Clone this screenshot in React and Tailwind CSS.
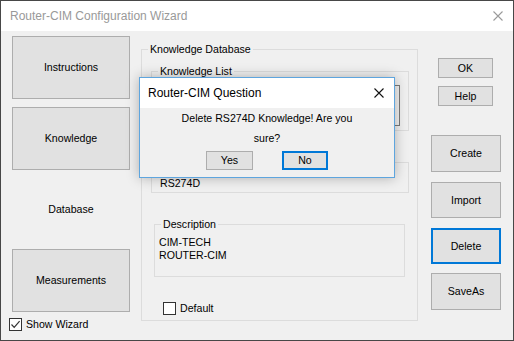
const font = { fontFamily: '"Liberation Sans", Arial, sans-serif' };

function WinButton({ children, className = "", focused = false }) {
  return (
    <div
      className={`flex items-center justify-center bg-[#e1e1e1] text-[10.6px] leading-[13px] text-black ${
        focused ? "border-2 border-[#0078d7]" : "border border-[#adadad]"
      } ${className}`}
    >
      {children}
    </div>
  );
}

function CloseIcon({ color, className = "" }) {
  return (
    <svg width="10" height="10" viewBox="0 0 10 10" className={className}>
      <path d="M0.5 0.5 L9.5 9.5 M9.5 0.5 L0.5 9.5" stroke={color} strokeWidth="1.1" fill="none" />
    </svg>
  );
}

function Group({ title, className = "", legendClass = "ml-[6px]", children }) {
  return (
    <fieldset className={`border border-[#dcdcdc] ${className}`}>
      <legend className={`${legendClass} px-[2px] text-[10.6px] leading-[13px] text-black`}>{title}</legend>
      {children}
    </fieldset>
  );
}

function CheckBox({ checked }) {
  return (
    <div className="flex h-[13px] w-[13px] items-center justify-center border border-[#333333] bg-white">
      {checked ? (
        <svg width="11" height="11" viewBox="0 0 11 11">
          <path d="M1.5 5.5 L4.2 8.3 L9.6 2.2" stroke="#333333" strokeWidth="1.2" fill="none" />
        </svg>
      ) : null}
    </div>
  );
}

export default function App() {
  return (
    <div style={font} className="relative flex h-[341px] w-[514px] flex-col border border-[#474747] bg-[#f0f0f0] text-black">
      {/* title bar */}
      <div className="flex h-[30px] shrink-0 items-center justify-between bg-white pl-[9px] pr-[10px]">
        <span className="text-[12px] leading-[14px] text-[#999999]">Router-CIM Configuration Wizard</span>
        <CloseIcon color="#9a9a9a" />
      </div>

      <div className="flex flex-1">
        {/* left navigation */}
        <div className="flex w-[129px] shrink-0 flex-col pl-[11px] pt-[5px]">
          <WinButton className="h-[63px] w-[118px]">Instructions</WinButton>
          <WinButton className="mt-[8px] h-[63px] w-[118px]">Knowledge</WinButton>
          <div className="flex h-[79px] w-[118px] items-center justify-center text-[10.6px] leading-[13px]">Database</div>
          <WinButton className="h-[63px] w-[118px]">Measurements</WinButton>
          <div className="-ml-[3px] mt-[6px] flex items-center gap-[4px]">
            <CheckBox checked />
            <span className="text-[10.6px] leading-[13px]">Show Wizard</span>
          </div>
        </div>

        {/* knowledge database */}
        <Group title="Knowledge Database" className="ml-[11px] mt-[12px] h-[278px] w-[277px] shrink-0">
          <Group title="Knowledge List" className="ml-[9px] mr-[8px] mt-[9px] h-[66px]">
            <div className="ml-[8px] mr-[8px] mt-[7px] h-[41px] border border-[#7a7a7a] bg-[#f0f0f0]" />
          </Group>
          <Group title="Name" className="ml-[9px] mr-[8px] mt-[25px] h-[37px]">
            <div className="pl-[8px] pt-[8px] text-[10.6px] leading-[13px]">RS274D</div>
          </Group>
          <Group title="Description" className="ml-[12px] mr-[12px] mt-[25px] h-[59px]">
            <div className="pl-[4px] pt-[5px] text-[10.6px] leading-[13px]">
              <div>CIM-TECH</div>
              <div>ROUTER-CIM</div>
            </div>
          </Group>
          <div className="ml-[21px] mt-[25px] flex items-center gap-[4px]">
            <CheckBox />
            <span className="text-[10.6px] leading-[13px]">Default</span>
          </div>
        </Group>

        {/* right actions */}
        <div className="flex flex-1 flex-col pt-[27px]">
          <WinButton className="ml-[20px] h-[20px] w-[55px]">OK</WinButton>
          <WinButton className="ml-[20px] mt-[8px] h-[20px] w-[55px]">Help</WinButton>
          <WinButton className="ml-[13px] mt-[29px] h-[37px] w-[70px]">Create</WinButton>
          <WinButton className="ml-[13px] mt-[10px] h-[36px] w-[70px]">Import</WinButton>
          <WinButton focused className="ml-[13px] mt-[10px] h-[36px] w-[70px]">Delete</WinButton>
          <WinButton className="ml-[13px] mt-[9px] h-[37px] w-[70px]">SaveAs</WinButton>
        </div>
      </div>

      {/* modal question */}
      <div className="absolute left-[138px] top-[76px] flex h-[101px] w-[256px] flex-col border border-[#5ea5de] bg-[#f0f0f0] shadow-[0_0_12px_rgba(0,0,0,0.28)]">
        <div className="flex h-[30px] shrink-0 items-center justify-between bg-white pl-[8px] pr-[10px]">
          <span className="text-[12px] leading-[14px]">Router-CIM Question</span>
          <CloseIcon color="#111111" />
        </div>
        <div className="flex flex-col items-center text-[10.6px] leading-[20px]">
          <div>Delete RS274D Knowledge! Are you</div>
          <div>sure?</div>
        </div>
        <div className="mt-[3px] flex justify-center gap-[29px]">
          <WinButton className="h-[19px] w-[47px]">Yes</WinButton>
          <WinButton focused className="h-[19px] w-[46px]">No</WinButton>
        </div>
      </div>
    </div>
  );
}
